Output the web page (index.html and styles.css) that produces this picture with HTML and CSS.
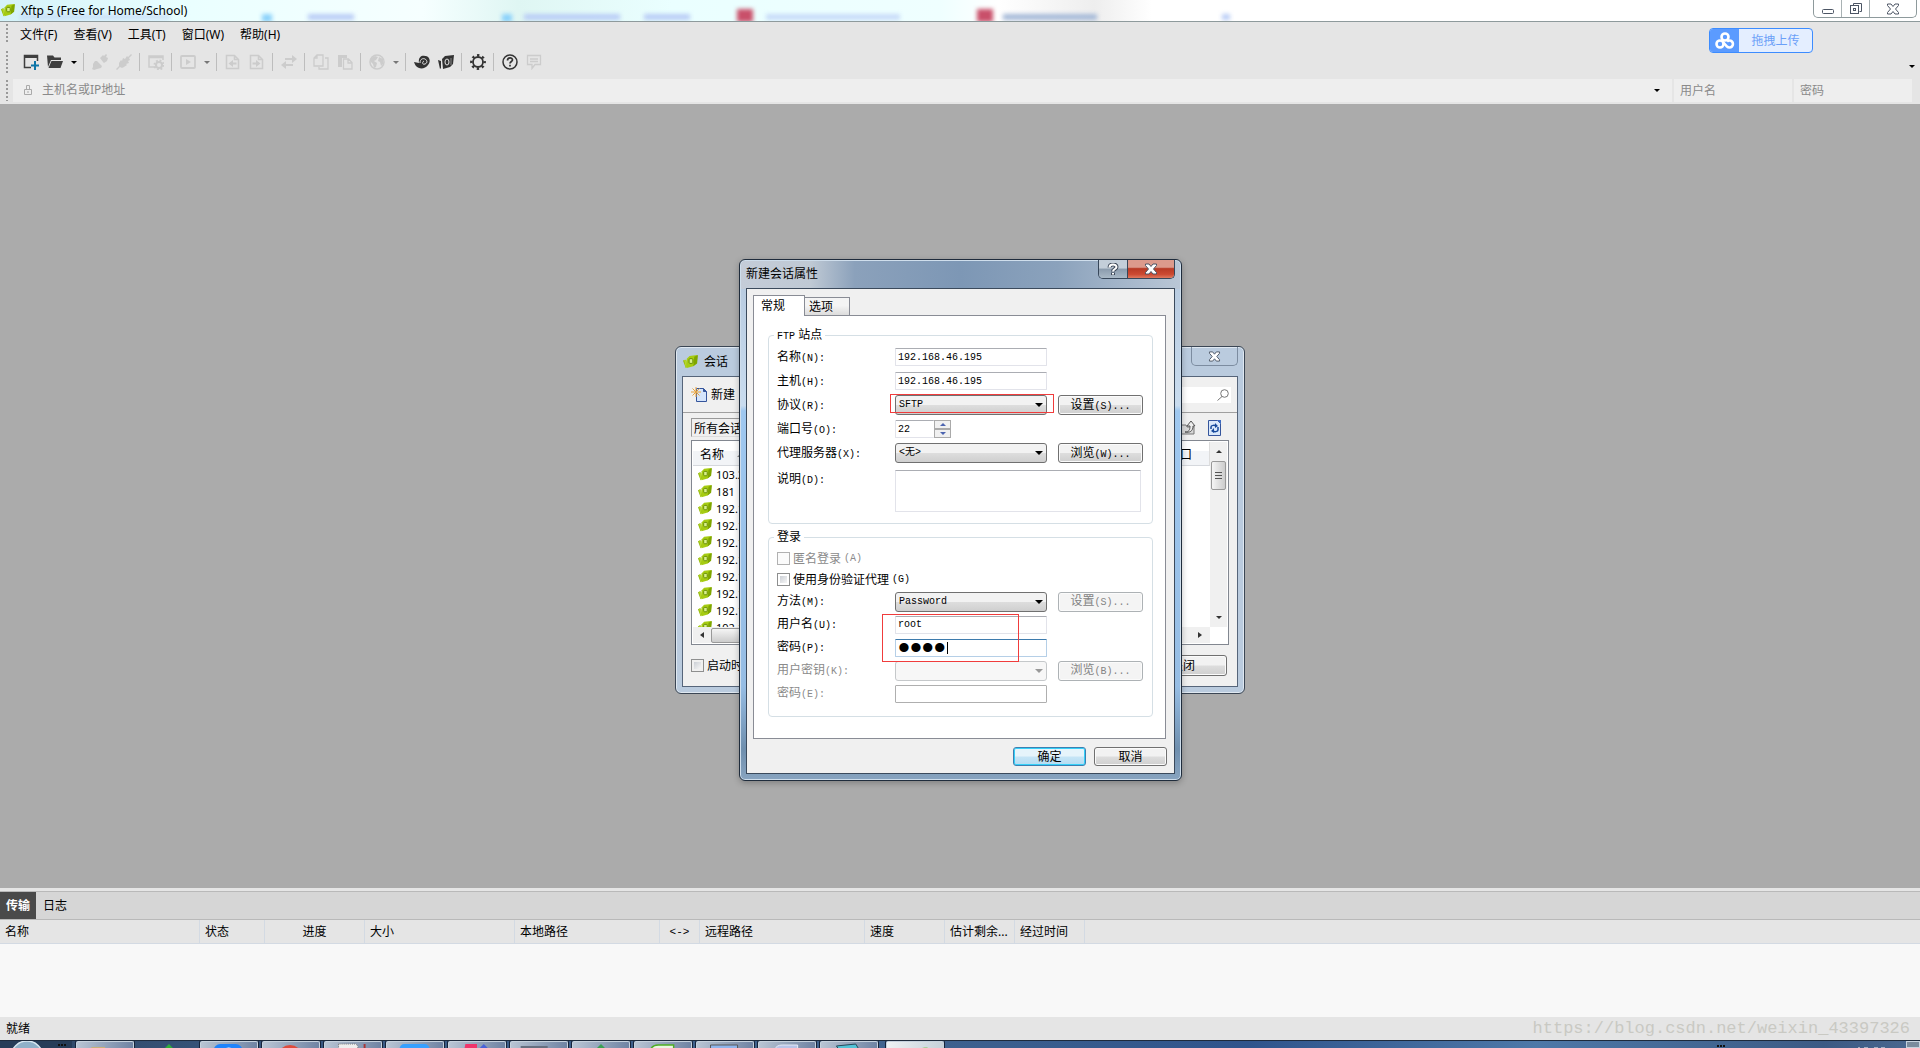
FILE: index.html
```html
<!DOCTYPE html>
<html lang="zh-CN">
<head>
<meta charset="utf-8">
<title>Xftp 5</title>
<link rel="stylesheet" href="styles.css">
</head>
<body>
<svg class="defs" aria-hidden="true">
  <symbol id="leaf" viewBox="0 0 16 16">
    <path d="M0 7l3-1 2 7-2 2z" fill="#8fb500"/>
    <path d="M1 6l3 1v7l-1 1z" fill="#b4d62a"/>
    <path d="M4 5l3-3 8-1-1 9-3 3-7 2z" fill="#a6cc12"/>
    <path d="M12 3l4-2-1 9-4 3z" fill="#7fa600"/>
    <rect x="6.500" y="5" width="4" height="5" rx="1" fill="#d9f08a" stroke="#5f8500"/>
  </symbol>
  <symbol id="cross" viewBox="0 0 14 12">
    <path d="M1.500 1h3.500l2 2.500L9 1h3.500v1.500L9.500 6l3 3.500V11H9L7 8.500 5 11H1.500V9.500l3-3.500-3-3.500z" fill="#fff" stroke="#4c5564"/>
  </symbol>
</svg>

<header class="titlebar">
  <svg class="app-icon" viewBox="0 0 16 16"><use href="#leaf"/></svg>
  <h1>Xftp 5 (Free for Home/School)</h1>
  <div class="ghosts" aria-hidden="true">
    <i class="ghost g1"></i><i class="ghost g2"></i><i class="ghost g3"></i><i class="ghost g8"></i><i class="ghost g4"></i><i class="ghost g9"></i>
    <i class="ghost red r1"></i><i class="ghost g5"></i><i class="ghost red r2"></i><i class="ghost g6"></i><i class="ghost g7"></i>
  </div>
  <div class="caption">
    <button aria-label="最小化"><svg width="14" height="12"><rect x="1.500" y="6.500" width="11" height="4" rx="1" fill="#fff" stroke="#4c5564"/></svg></button>
    <button aria-label="还原"><svg width="14" height="13"><path d="M4.500 3.500v-2h8v8h-2" fill="#fff" stroke="#4c5564"/><rect x="1.500" y="3.500" width="8" height="8" fill="#fff" stroke="#4c5564"/><rect x="4.500" y="6.500" width="2" height="2" fill="#fff" stroke="#4c5564"/></svg></button>
    <button class="wide" aria-label="关闭"><svg width="14" height="12"><use href="#cross"/></svg></button>
  </div>
</header>

<div class="chrome">
  <nav class="menubar">
    <span class="grip"></span>
    <a href="#">文件(F)</a><a href="#">查看(V)</a><a href="#">工具(T)</a><a href="#">窗口(W)</a><a href="#">帮助(H)</a>
  </nav>
  <div class="toolbar">
    <span class="grip"></span>
    <button aria-label="新建"><svg viewBox="0 0 16 16"><path d="M8 13.500H1.500v-12h13V7M1 3h14" fill="none" stroke="#3f3f3f" stroke-width="1.500"/><path d="M1 1h14v3H1z" fill="#3f3f3f"/><path d="M12 7v9M8 11.500h8" stroke="#0d76a8" stroke-width="2"/></svg></button>
    <button aria-label="打开"><svg viewBox="0 0 16 16"><path d="M0 1.500h6l1.500 2H14V6H4L1 13z" fill="#3f3f3f"/><path d="M4.500 7H16l-2.500 7H1.500z" fill="#3f3f3f"/></svg></button>
    <button class="drop" aria-label="更多"></button><i class="sep"></i>
    <button class="off" aria-label="断开"><svg viewBox="0 0 16 16"><path d="M8 4l3-3 1 1 2-2 1 1-1 2 2 1-1 3-3 2-1-1zM1 10l2-3 2 0 5 5-1 2-4 1-3 1-2-1 1-2z"/></svg></button>
    <button class="off" aria-label="连接"><svg viewBox="0 0 16 16"><path d="M3 9l2-3 1 1 1-3 2 1 2-3 1 1 3-3 1 1-3 3 1 2-2 1 1 2-3 1 1 1-3 2-2 1-2-1-3 3-1-1 3-3z"/></svg></button><i class="sep"></i>
    <button class="off" aria-label="属性"><svg viewBox="0 0 16 16"><path d="M7 13H1V2h14v4M1 3.500h14" fill="none" stroke="currentColor" stroke-width="1.500"/><circle cx="11" cy="11" r="3" fill="none" stroke="currentColor" stroke-width="2"/><circle cx="11" cy="11" r="4.500" fill="none" stroke="currentColor" stroke-width="2" stroke-dasharray="1.800 1.730"/></svg></button><i class="sep"></i>
    <button class="off" aria-label="同步"><svg viewBox="0 0 16 16"><rect x="1" y="2" width="14" height="12" rx="1" fill="none" stroke="currentColor" stroke-width="1.800"/><path d="M6 5l5 3-5 3z"/></svg></button>
    <button class="drop gray" aria-label="更多"></button><i class="sep"></i>
    <button class="off" aria-label="下载"><svg viewBox="0 0 16 16"><path d="M1.500 1.500h8l4 4v9h-12zM9.500 1.500v4h4" fill="none" stroke="currentColor" stroke-width="1.500"/><path d="M3.500 9.500L8 6v2.500h3.500v2H8V13z"/></svg></button>
    <button class="off" aria-label="上传"><svg viewBox="0 0 16 16"><path d="M1.500 1.500h8l4 4v9h-12zM9.500 1.500v4h4" fill="none" stroke="currentColor" stroke-width="1.500"/><path d="M11.500 9.500L7 6v2.500H3.500v2H7V13z"/></svg></button><i class="sep"></i>
    <button class="off" aria-label="交换"><svg viewBox="0 0 16 16"><path d="M4 4h7V1l5 4-5 4V6H4zM12 10H5V7l-5 4 5 4v-3h7z"/></svg></button><i class="sep"></i>
    <button class="off" aria-label="复制"><svg viewBox="0 0 16 16"><path d="M4 1h6v11H1V4zM12 4h3v11H6v-2M4 1v3H1" fill="none" stroke="currentColor" stroke-width="1.300"/></svg></button>
    <button class="off" aria-label="粘贴"><svg viewBox="0 0 16 16"><path d="M1 1h9v3H5v9H1z"/><path d="M6.500 5h5l3.500 3.500V15H6.500zM11 5v4h4" fill="none" stroke="currentColor" stroke-width="1.300"/></svg></button><i class="sep"></i>
    <button class="off" aria-label="编码"><svg viewBox="0 0 16 16"><circle cx="8" cy="8" r="7" fill="none" stroke="currentColor" stroke-width="1.500"/><path d="M2 4l4-2 3 1-2 3-2 1 3 2-1 4-2 1-1-4-3-3zM10 3l4 2v5l-2 2-1-4-2-1z"/></svg></button>
    <button class="drop gray" aria-label="更多"></button><i class="sep"></i>
    <button aria-label="Xshell"><svg viewBox="0 0 16 16"><path d="M0 8l5 1c-1-5 2-8 6-7 5 0 6 6 3 9-2 3-6 4-9 3C2 13 1 11 0 8z" fill="#333"/><path d="M6 9c0-4 3-5 5-4s3 4 0 5-3-2-1-3" fill="none" stroke="#e5e5e5"/></svg></button>
    <button aria-label="Xftp"><svg viewBox="0 0 16 16"><path d="M0 6l3 1v7l-1 1zM4 5l3-3 9-1-1 9-3 3-7 2z" fill="#333"/><ellipse cx="9" cy="8" rx="2" ry="3" fill="none" stroke="#e5e5e5"/><path d="M13 4v7" stroke="#888"/></svg></button><i class="sep"></i>
    <button aria-label="选项"><svg viewBox="0 0 16 16"><circle cx="8" cy="8" r="5" fill="none" stroke="#333" stroke-width="1.800"/><circle cx="8" cy="8" r="6.700" fill="none" stroke="#333" stroke-width="2.400" stroke-dasharray="2.400 2.862" stroke-dashoffset="1.200"/></svg></button><i class="sep"></i>
    <button aria-label="帮助"><svg viewBox="0 0 16 16"><circle cx="8" cy="8" r="7" fill="none" stroke="#333" stroke-width="1.500"/><path d="M5.500 6.500c0-3.500 5-3.300 5-.5 0 1.500-2.500 1.500-2.500 3.500M8 10.800v1.700" fill="none" stroke="#333" stroke-width="1.700"/></svg></button>
    <button class="off" aria-label="反馈"><svg viewBox="0 0 16 16"><path d="M1.500 1.500h13v9H9l-3 4v-4H1.500zM4 5h8M4 7.500h8" fill="none" stroke="currentColor" stroke-width="1.300"/></svg></button>
    <button class="drop overflow" aria-label="工具栏选项"></button>
  </div>
  <form class="address">
    <span class="grip"></span>
    <label class="host"><svg width="10" height="12" viewBox="0 0 10 12"><path d="M1.500 5.500h7v5h-7zM3.500 5V1.500h3V5M5 7v2" fill="none" stroke="#aaa"/></svg><input type="text" placeholder="主机名或IP地址" aria-label="主机名或IP地址"><i class="tri"></i></label>
    <input type="text" placeholder="用户名" aria-label="用户名">
    <input type="text" placeholder="密码" aria-label="密码">
  </form>
  <button class="upload"><span><svg width="20" height="18" viewBox="0 0 20 18" fill="none" stroke="#fff" stroke-width="2.600"><circle cx="10" cy="5" r="3.500"/><circle cx="5" cy="12" r="3.500"/><path d="M12 9.500a3.500 3.500 0 1 1 0 5L8 10"/></svg></span><b>拖拽上传</b></button>
</div>

<main class="workspace">
  <section class="win sessions" aria-label="会话">
    <div class="win-title"><svg width="15" height="15"><use href="#leaf"/></svg><h2>会话</h2>
      <button aria-label="关闭"><svg width="13" height="11"><use href="#cross"/></svg></button></div>
    <div class="client">
      <div class="s-tools">
        <button><svg width="17" height="16" viewBox="0 0 17 16"><path d="M5.500 1.500h7l3 3v10h-10z" fill="#d4e4fb" stroke="#35559c"/><path d="M12.500 1.500v3h3" fill="#35559c" stroke="#35559c"/><path d="M5 0v10M0 5h10M1.500 1.500l7 7M8.500 1.500l-7 7" stroke="#e8a33c"/></svg>新建</button>
        <label class="search"><input type="text" aria-label="搜索"><svg width="12" height="12" viewBox="0 0 12 12" fill="none" stroke="#777"><circle cx="7.500" cy="4.500" r="3.800"/><path d="M5 7.500L.5 11.500"/></svg></label>
      </div>
      <div class="s-path">
        <input type="text" value="所有会话" aria-label="路径">
        <button aria-label="上一级"><svg width="16" height="15" viewBox="0 0 16 15"><path d="M1 5h5l1 2h7v7H1z" fill="#d8d8d8" stroke="#777"/><path d="M5 12c4 0 5-2 5-6H7l4-5 4 5h-2c0 5-3 7-8 6z" fill="#eee" stroke="#555"/></svg></button>
        <button aria-label="刷新"><svg width="13" height="16" viewBox="0 0 13 16"><path d="M.5.500h9l3 3v12H.5z" fill="#d9e8fb" stroke="#35559c"/><path d="M9 0l4 4V0z" fill="#3d6cc4"/><path d="M3 9V7c0-2 4-2 5-1M10 7v3c0 2-4 2-5 1" fill="none" stroke="#16499c" stroke-width="1.500"/><path d="M7 3v5l3-2zM6 8v5l-3-2z" fill="#16499c"/></svg></button>
      </div>
      <div class="s-list">
        <div class="s-scroll">
          <table>
            <thead><tr><th>名称<i></i></th><th class="port">端口</th></tr></thead>
            <tbody>
              <tr><td colspan="2"><svg><use href="#leaf"/></svg>103.2</td></tr>
              <tr><td colspan="2"><svg><use href="#leaf"/></svg>181</td></tr>
              <tr><td colspan="2"><svg><use href="#leaf"/></svg>192.1</td></tr>
              <tr><td colspan="2"><svg><use href="#leaf"/></svg>192.1</td></tr>
              <tr><td colspan="2"><svg><use href="#leaf"/></svg>192.1</td></tr>
              <tr><td colspan="2"><svg><use href="#leaf"/></svg>192.1</td></tr>
              <tr><td colspan="2"><svg><use href="#leaf"/></svg>192.1</td></tr>
              <tr><td colspan="2"><svg><use href="#leaf"/></svg>192.1</td></tr>
              <tr><td colspan="2"><svg><use href="#leaf"/></svg>192.1</td></tr>
              <tr><td colspan="2"><svg><use href="#leaf"/></svg>192.1</td></tr>
            </tbody>
          </table>
        </div>
        <div class="vbar"><i class="up"></i><b></b><i class="down"></i></div>
        <div class="hbar"><i class="left"></i><b></b><i class="right"></i></div>
      </div>
      <div class="s-foot"><label><input type="checkbox">启动时</label><button>关闭</button></div>
    </div>
  </section>

  <section class="win props" aria-label="新建会话属性">
    <div class="win-title"><h2>新建会话属性</h2>
      <div class="p-caption"><button aria-label="帮助"><svg width="12" height="13" viewBox="0 0 12 13"><path d="M2.500 4.500c0-4 7-4 7-.5C9.500 6 6 6 6 8.500M6 9.500V12" fill="none" stroke="#3f4a5a" stroke-width="4"/><path d="M2.500 4.500c0-4 7-4 7-.5C9.500 6 6 6 6 8.500M6 10v1.500" fill="none" stroke="#fff" stroke-width="2"/></svg></button><button class="x" aria-label="关闭"><svg width="14" height="12"><use href="#cross"/></svg></button></div></div>
    <form class="client">
      <div class="tabs"><button type="button" class="on">常规</button><button type="button">选项</button></div>
      <div class="page">
        <fieldset>
          <legend><kbd>FTP</kbd> 站点</legend>
          <div class="grid">
            <label for="name">名称<kbd>(N):</kbd></label><input id="name" type="text" value="192.168.46.195">
            <label for="host">主机<kbd>(H):</kbd></label><input id="host" type="text" value="192.168.46.195">
            <label for="proto">协议<kbd>(R):</kbd></label><span class="sel"><select id="proto"><option>SFTP</option></select><i class="mark m1"></i></span><button type="button">设置<kbd>(S)...</kbd></button>
            <label for="port">端口号<kbd>(O):</kbd></label><span class="spin"><input id="port" type="text" value="22"><i class="up"></i><i class="down"></i></span>
            <label for="proxy">代理服务器<kbd>(X):</kbd></label><span class="sel"><select id="proxy"><option>&lt;无&gt;</option></select></span><button type="button">浏览<kbd>(W)...</kbd></button>
            <label for="desc" class="top">说明<kbd>(D):</kbd></label><textarea id="desc"></textarea>
          </div>
        </fieldset>
        <fieldset class="login">
          <legend>登录</legend>
          <label class="check off"><input type="checkbox" disabled>匿名登录<kbd>(A)</kbd></label>
          <label class="check"><input type="checkbox">使用身份验证代理<kbd>(G)</kbd></label>
          <div class="grid tight">
            <label for="method">方法<kbd>(M):</kbd></label><span class="sel"><select id="method"><option>Password</option></select></span><button type="button" disabled>设置<kbd>(S)...</kbd></button>
            <label for="user">用户名<kbd>(U):</kbd></label><span class="sel plain"><input id="user" type="text" value="root"><i class="mark m2"></i></span>
            <label for="pass">密码<kbd>(P):</kbd></label><span class="pw"><input id="pass" type="password" value="root" class="focus"><i></i></span>
            <label for="key" class="off">用户密钥<kbd>(K):</kbd></label><span class="sel off"><select id="key" disabled></select></span><button type="button" disabled>浏览<kbd>(B)...</kbd></button>
            <label for="phrase" class="off">密码<kbd>(E):</kbd></label><input id="phrase" type="password" disabled>
          </div>
        </fieldset>
      </div>
      <div class="actions"><button type="button" class="ok">确定</button><button type="button">取消</button></div>
    </form>
  </section>
</main>

<section class="transfer">
  <div class="t-tabs"><button class="on">传输</button><button>日志</button></div>
  <div class="t-body">
    <table>
      <colgroup><col class="c200"><col class="c65"><col class="c100"><col class="c150"><col class="c145"><col class="c40"><col class="c165"><col class="c80"><col class="c70"><col class="c70"><col></colgroup>
      <thead><tr><th>名称</th><th>状态</th><th class="mid">进度</th><th>大小</th><th>本地路径</th><th class="mid code">&lt;-&gt;</th><th>远程路径</th><th>速度</th><th>估计剩余...</th><th>经过时间</th><th></th></tr></thead>
    </table>
  </div>
</section>
<footer class="status"><span>就绪</span><span class="link">https://blog.csdn.net/weixin_43397326</span></footer>
<div class="taskbar" aria-hidden="true">
  <div class="orb"><svg width="76" height="8"><circle cx="27" cy="17" r="16" fill="#8fb0c8" stroke="#d8e8f2" stroke-width="1.500"/><path d="M58 5h2M61 5h2M64 5h2" stroke="#111" stroke-width="2"/></svg></div>
  <i class="task"><svg viewBox="0 0 58 8"><path d="M15 8V6h14v2z" fill="#c8b078"/></svg></i>
  <i class="task flat"><svg viewBox="0 0 58 8"><path d="M26 8l5-5 5 5z" fill="#2fae3a"/></svg></i>
  <i class="task"><svg viewBox="0 0 58 8"><rect x="13" y="3" width="30" height="14" rx="7" fill="#1f83fb"/><path d="M24 8q5-3 9 0z" fill="#fff"/></svg></i>
  <i class="task"><svg viewBox="0 0 58 8"><circle cx="28" cy="17" r="13" fill="#e04b3c"/></svg></i>
  <i class="task"><svg viewBox="0 0 58 8"><path d="M14 3h18l2 2v3H14z" fill="#eee" stroke="#777" stroke-dasharray="1 1"/><path d="M41 3v5" stroke="#a33" stroke-width="2"/></svg></i>
  <i class="task"><svg viewBox="0 0 58 8"><rect x="13" y="3" width="31" height="14" rx="5" fill="#37a0ff"/></svg></i>
  <i class="task"><svg viewBox="0 0 58 8"><path d="M17 3h12v5H16z" fill="#f0356b"/><path d="M31 8l5-5 5 5z" fill="#4a62d8"/></svg></i>
  <i class="task"><svg viewBox="0 0 58 8"><path d="M10 5h28v3H10z" fill="#666f80"/></svg></i>
  <i class="task"><svg viewBox="0 0 58 8"><path d="M24 8l5-5 5 5z" fill="#3ba054"/></svg></i>
  <i class="task"><svg viewBox="0 0 58 8"><path d="M16 9q2-5 8-5h16v5z" fill="#eaf5e2" stroke="#4fae22" stroke-width="1.500"/></svg></i>
  <i class="task"><svg viewBox="0 0 58 8"><path d="M14 4h28v5H14z" fill="#8fb5ec" stroke="#555"/></svg></i>
  <i class="task"><svg viewBox="0 0 58 8"><path d="M16 9q2-5 8-5h16v5z" fill="#b8c4e8" stroke="#e7ecf8"/></svg></i>
  <i class="task"><svg viewBox="0 0 58 8"><path d="M16 5l20-2 3 5H18z" fill="#53c2d6" stroke="#245"/></svg></i>
  <i class="task active"><svg viewBox="0 0 58 8"><path d="M34 8l5-2 3 0v2z" fill="#a9cf9a"/></svg></i>
  <svg class="tray" width="200" height="8"><path d="M8 5h2M11 5h2M14 5h2" stroke="#111" stroke-width="2"/><path d="M149 7h2M155 7h4M165 7h4M172 7h4" stroke="#fff"/></svg>
  <i class="show"></i>
</div>
</body>
</html>
```
FILE: styles.css
```css
* { box-sizing: border-box; }
html { font: 12px/16px "Noto Sans", "Noto Sans CJK SC", sans-serif; color: #000; }
body { margin: 0; min-height: 100vh; display: flex; flex-direction: column; background: #e5e5e5; overflow: hidden; }
button, input, select, textarea { font: inherit; color: inherit; margin: 0; padding: 0; border: 0; background: none; border-radius: 0; outline: 0; min-width: 0; }
h1, h2 { font: inherit; margin: 0; }
a { color: inherit; text-decoration: none; }
kbd { font: 10px/14px "Liberation Mono", monospace; }
svg { display: block; flex: none; }
table { border-collapse: separate; border-spacing: 0; table-layout: fixed; width: 100%; }
th { font-weight: normal; text-align: left; }
.defs { position: absolute; width: 0; height: 0; }

/* title bar */
.titlebar { position: relative; height: 22px; display: flex; align-items: flex-start; border-bottom: 1px solid #8e9a9c; overflow: hidden;
  background: linear-gradient(90deg, #d4f2f9 0, #eaffff 10%, #f6ffff 22%, #dff6f3 27%, #eaffff 35%, #efffff 49%, #fff 52%, #eee 57%, #fff 60%, #fff 100%); }
.app-icon { width: 14px; height: 14px; margin: 3px 6px 0 1px; }
.titlebar h1 { position: relative; z-index: 1; line-height: 21px; flex: 1; }
.ghosts { position: absolute; inset: 0; filter: blur(2px); }
.ghost { position: absolute; top: 14px; height: 6px; width: 46px; background: #b9cdf6; }
.g1 { left: 20px; width: 150px; opacity: .5; }
.g2 { left: 262px; width: 10px; height: 8px; background: #8bd2fb; }
.g3 { left: 308px; }
.g8 { left: 502px; width: 10px; height: 8px; background: #8bd2fb; }
.g4 { left: 524px; width: 96px; }
.g9 { left: 644px; }
.red { top: 9px; width: 16px; height: 13px; background: #c9506a; }
.r1 { left: 737px; }
.r2 { left: 977px; }
.g5 { left: 766px; width: 134px; opacity: .7; }
.g6 { left: 1003px; width: 94px; background: #a5b9d8; }
.g7 { left: 1222px; width: 8px; }
.caption { position: relative; display: flex; height: 18px; margin-right: 3px; border: 1px solid #8e9a9c; border-top: 0; border-radius: 0 0 5px 5px; }
.caption button { width: 28px; display: grid; place-items: center; border-right: 1px solid #a9b2b4; }
.caption button.wide { width: 46px; border: 0; }

/* menu, tool and address bars */
.chrome { position: relative; height: 82px; flex: none; }
.grip { width: 2px; flex: none; margin: 2px 12px 2px 6px; background: repeating-linear-gradient(#999 0 2px, transparent 2px 4px); }
.menubar { display: flex; height: 24px; line-height: 25px; }
.menubar a { margin-right: 16px; }
.toolbar { display: flex; height: 32px; align-items: center; }
.toolbar .grip { height: 23px; margin: 0 11px 0 6px; }
.toolbar button { width: 24px; height: 24px; padding: 4px; color: #ccc; }
.toolbar button svg { width: 16px; height: 16px; fill: #ccc; }
.toolbar .sep { width: 1px; height: 18px; margin: 0 4px 0 3px; background: #bdbdbd; }
.toolbar .drop { width: 13px; display: grid; place-items: center; }
.drop::after, .tri { content: ""; border: 3px solid transparent; border-top-color: #000; border-bottom: 0; }
.drop.gray::after { border-top-color: #777; }
.toolbar .overflow { margin-left: auto; align-self: flex-end; margin-right: 2px; }
.address { display: flex; height: 24px; padding-top: 1px; }
.address .grip { margin: 1px 5px 1px 6px; }
.address label, .address > input { background: #eee; height: 23px; padding-bottom: 1px; }
.address label { flex: 1; display: flex; align-items: center; padding: 0 12px 1px 10px; }
.address label input { flex: 1; padding-left: 9px; }
.address > input { width: 118px; margin-left: 2px; padding-left: 6px; }
.address > input:last-child { margin-right: 8px; }
.address ::placeholder { color: #8a8a8a; opacity: 1; }
.upload { position: absolute; right: 107px; top: 6px; width: 104px; height: 25px; display: flex; overflow: hidden; border: 1px solid #3c8cff; border-radius: 4px; background: #e4eeff; color: #6ba0f8; }
.upload span { width: 29px; height: 100%; background: #5b9bff; display: grid; place-items: center; }
.upload b { flex: 1; font-weight: normal; line-height: 23px; }

/* workspace and windows */
.workspace { position: relative; flex: 1; background: #ababab; }
.win { position: absolute; border: 1px solid #3b4654; border-radius: 6px; }
.win-title { display: flex; }
.sessions { left: calc(50% - 285px); top: 242px; width: 570px; height: 348px; padding: 0 6px 6px; background: #bacbde; box-shadow: inset 0 0 0 1px #dfe8f1; display: flex; flex-direction: column; }
.sessions .win-title { height: 29px; align-items: center; padding-left: 1px; gap: 6px; }
.sessions .win-title button { align-self: flex-start; margin-left: auto; width: 47px; height: 19px; border: 1px solid #7c8ca0; border-top: 0; border-radius: 0 0 5px 5px; display: grid; place-items: center; }
.sessions .client { flex: 1; background: #f0f0f0; border: 1px solid #56657a; display: flex; flex-direction: column; }
.s-tools { height: 36px; display: flex; align-items: center; justify-content: space-between; padding: 0 6px 0 8px; border-bottom: 1px solid #a0a0a0; }
.s-tools button { display: flex; gap: 3px; align-items: center; }
.search { width: 200px; height: 16px; background: #fff; display: flex; align-items: center; padding-right: 2px; }
.search input { flex: 1; }
.s-path { height: 27px; display: flex; align-items: center; padding: 2px 16px 0 8px; gap: 12px; }
.s-path input { flex: 1; height: 19px; border: 1px solid #999; border-right-color: #ddd; border-bottom-color: #ddd; padding-left: 2px; }
.s-list { margin: 0 8px; height: 205px; background: #fff; border: 1px solid #828790; display: grid; grid-template: 1fr 16px / 1fr 17px; padding: 1px; }
.s-scroll { overflow: hidden; height: 185px; }
.s-list th { height: 24px; padding: 2px 0 0 7px; background: linear-gradient(#fff 40%, #f2f4f7 40%); border-bottom: 1px solid #d5d8dd; }
.s-list th i { display: inline-block; margin-left: 13px; border: 4px solid transparent; border-bottom-color: #888; border-top: 0; vertical-align: middle; }
.s-list .port { width: 70px; padding-left: 28px; border-right: 1px solid #ddd; }
.s-list td { height: 17px; padding: 0 0 0 5px; font-size: 11px; line-height: 17px; }
.s-list td svg { width: 14px; height: 14px; float: left; margin: 1px 4px 0 0; }
.vbar, .hbar { background: #f0f0f0; display: flex; align-items: center; }
.vbar { flex-direction: column; padding: 8px 1px; }
.vbar b { width: 15px; height: 29px; margin-top: 8px; border: 1px solid #999; border-radius: 2px; background: repeating-linear-gradient(#555 0 1px, transparent 1px 3px) 50% 50% / 7px 8px no-repeat, linear-gradient(90deg, #f5f5f5, #ccc); }
.hbar { padding: 0 8px 0 7px; }
.hbar b { width: 300px; height: 15px; margin-left: 7px; border: 1px solid #999; border-radius: 2px; background: linear-gradient(#f5f5f5, #ccc); }
.up, .down, .left, .right { border: 3px solid transparent; }
.up { border-bottom-color: #333; border-top: 0; }
.down { border-top-color: #333; border-bottom: 0; margin-top: auto; }
.left { border-right: 4px solid #333; border-left: 0; }
.right { border-left: 4px solid #333; border-right: 0; margin-left: auto; }
.s-foot { flex: 1; display: flex; align-items: center; justify-content: space-between; padding: 0 10px 0 8px; }
.s-foot label { display: flex; align-items: center; gap: 3px; }
input[type=checkbox] { appearance: none; width: 13px; height: 13px; border: 1px solid #8e8f8f; background: linear-gradient(135deg, #cbcfd5, #f6f6f6) content-box #f4f4f4; padding: 2px; }
input[type=checkbox]:disabled { border-color: #b1b1b1; background: #fbfbfb; }
.s-foot button, .props .grid button, .actions button { border: 1px solid #707070; border-radius: 3px; background: linear-gradient(#f2f2f2 0 48%, #ddd 52%, #cfcfcf); box-shadow: inset 0 0 0 1px #fbfbfb; }
.s-foot button { width: 88px; height: 21px; }

/* session properties */
.props { left: calc(50% - 221px); top: 155px; width: 443px; height: 522px; padding: 0 6px 6px; border-color: #1f2c3c; box-shadow: inset 0 0 0 1px #cfdeec, 0 2px 6px rgba(0, 0, 0, .25);
  background: linear-gradient(90deg, #c4ccd8 0, #bfc9d4 16%, #8ba1bb 26%, #7d97b5 50%, #8ba2bc 72%, #bac7d6 100%) 0 0 / 100% 29px no-repeat, linear-gradient(#b5c8dd 0, #c9dcef 28%, #9fc8f0 29%, #96bde4 82%, #6f8fae 94%, #88a4c0); display: flex; flex-direction: column; }
.props .win-title { height: 28px; justify-content: space-between; }
.props h2 { line-height: 28px; }
.p-caption { display: flex; height: 19px; border: 1px solid #37475a; border-top: 0; border-radius: 0 0 5px 5px; overflow: hidden; }
.p-caption button { width: 28px; display: grid; place-items: center; background: linear-gradient(#c3ced9 45%, #8a9bad 50%, #a9b8c6); }
.p-caption .x { width: 47px; border-left: 1px solid #37475a; background: linear-gradient(#dc9a8c 0 40%, #b83a25 48%, #cc4a32 80%, #df7a60); }
.props .client { flex: 1; border: 1px solid #3b4a5c; background: #f0f0f0; display: flex; flex-direction: column; padding: 6px 8px 7px 6px; }
.tabs { display: flex; align-items: flex-end; height: 20px; }
.tabs button { height: 18px; width: 45px; border: 1px solid #898c95; border-left: 0; border-bottom: 0; padding-right: 12px; background: linear-gradient(#f4f4f4 45%, #dcdcdc); }
.tabs .on { position: relative; width: 52px; height: 21px; margin-bottom: -1px; background: #fff; border-left: 1px solid #898c95; }
.page { flex: 1; border: 1px solid #898c95; background: #fff; padding: 12px 12px 0 14px; }
fieldset { margin: 0 0 5px; padding: 3px 12px 10px 5px; border: 1px solid #d5dfe5; border-radius: 4px; min-width: 0; }
legend { padding: 0 3px; line-height: 14px; height: 14px; }
.login { margin-top: 6px; padding: 4px 12px 11px 5px; }
.grid { display: grid; grid-template-columns: 118px 152px 85px; grid-auto-rows: 24px; align-items: center; margin-left: 3px; }
.grid > label { grid-column: 1; line-height: 16px; }
.grid > button { grid-column: 3; margin-left: 11px; width: 85px; height: 20px; line-height: 16px; }
.grid > button:disabled { border-color: #adb2b5; background: #f4f4f4; color: #838383; }
.grid input { width: 152px; height: 18px; border: 1px solid #e2e3ea; border-top-color: #abadb3; border-radius: 1px; background: #fff; padding: 0 2px; font: 10px/14px "Liberation Mono", monospace; }
.tight { grid-auto-rows: 23px; }
.grid textarea { grid-column: 2 / 4; width: 246px; height: 42px; margin-top: 5px; border: 1px solid #e2e3ea; border-top-color: #abadb3; resize: none; align-self: start; }
.grid .top { align-self: start; margin-top: 6px; }
.props fieldset:first-child .grid { grid-template-rows: repeat(5, 24px) 48px; }
.sel { position: relative; display: block; }
.sel select { appearance: none; display: block; width: 152px; height: 20px; border: 1px solid #707070; border-radius: 3px; background: linear-gradient(#f2f2f2 0 48%, #ddd 52%, #cfcfcf); padding-left: 3px; font: 10px/16px "Liberation Mono", "Noto Sans CJK SC", monospace; }
.sel::after { content: ""; position: absolute; right: 4px; top: 8px; border: 4px solid transparent; border-top-color: #000; border-bottom: 0; pointer-events: none; }
.sel.plain::after { display: none; }
.sel.off select { border-color: #adb2b5; background: #f4f4f4; }
.sel.off::after { border-top-color: #999; }
.mark { position: absolute; border: 1px solid #f03c3c; pointer-events: none; z-index: 2; }
.m1 { left: -5px; top: -1px; width: 164px; height: 19px; }
.m2 { left: -13px; top: -2px; width: 137px; height: 48px; }
.plain input { display: block; }
.spin { display: grid; grid-template: 9px 9px / 39px 17px; }
.spin input { grid-row: 1 / 3; width: 39px; border-right: 0; }
.spin .up, .spin .down { border: 1px solid #aaa; background: #f0f0f0; margin: 0; display: grid; place-items: center; }
.spin i::after { content: ""; border: 3px solid transparent; }
.spin .up::after { border-bottom-color: #4c64b0; border-top: 0; }
.spin .down::after { border-top-color: #4c64b0; border-bottom: 0; }
.pw { position: relative; display: block; }
.grid .focus { display: block; border-color: #b5cfe7; border-top-color: #3d7bad; font: 34px/16px "Liberation Sans", sans-serif; }
.pw i { position: absolute; left: 52px; top: 3px; width: 1px; height: 12px; background: #000; }
.grid input:disabled { border-color: #afafaf; }
.check { display: flex; align-items: center; height: 21px; gap: 3px; margin-left: 3px; }
.off, .grid .off { color: #8a8a8a; }
.actions { display: flex; justify-content: flex-end; gap: 8px; padding-top: 8px; height: 27px; margin-right: -1px; }
.actions button { width: 73px; height: 19px; line-height: 16px; }
.actions .ok { border-color: #3c7fb1; box-shadow: inset 0 0 0 1px #35d0f8; background: linear-gradient(#e6f4fb 0 48%, #c6e5f6 52%, #b4dcf2); }

/* transfer panel */
.transfer { flex: none; height: 129px; border-top: 3px solid #e5e5e5; display: flex; flex-direction: column; }
.t-tabs { display: flex; height: 29px; background: #d6d6d6; border-top: 1px solid #b9b9b9; border-bottom: 1px solid #b9b9b9; }
.t-tabs button { padding: 0 7px; }
.t-tabs .on { width: 36px; padding: 0; background: #4a4a4a; color: #fff; font-weight: bold; }
.t-body { flex: 1; background: #f8f8f8; }
.t-body th { height: 24px; padding: 0 0 0 5px; background: #e5e5e5; border-right: 1px solid #d3dae3; border-bottom: 1px solid #d3dae3; white-space: nowrap; }
.t-body th:last-child { border-right: 0; }
.t-body .mid { text-align: center; padding: 0; }
.t-body .code { font-family: "Liberation Mono", monospace; font-size: 11px; }
.c200 { width: 200px; } .c65 { width: 65px; } .c100 { width: 100px; } .c150 { width: 150px; } .c145 { width: 145px; } .c40 { width: 40px; }
.c165 { width: 165px; } .c80 { width: 80px; } .c70 { width: 70px; }
.status { flex: none; height: 23px; display: flex; justify-content: space-between; padding: 0 10px 0 6px; line-height: 24px; }
.link { font: 17px/23px "Liberation Mono", monospace; color: #c9c9c3; }

/* taskbar */
.taskbar { flex: none; height: 8px; display: flex; gap: 4px; overflow: hidden; border-top: 1px solid #1d2a3c; background: linear-gradient(90deg, #2f4766, #3b5b86 20%, #41648f 45%, #2f548c 65%, #4d78a8 80%, #3c5a84 95%, #4a6890); }
.orb { width: 72px; background: #263c58; }
.orb svg { margin-top: -1px; }
.task { width: 58px; border: 1px solid #c6d2de; border-bottom: 0; border-radius: 2px 2px 0 0; background: linear-gradient(100deg, #b9c5d4, #6f83a3); box-shadow: 0 0 0 1px #15233a; }
.task svg { width: 56px; height: 8px; margin-top: -1px; }
.flat { border-color: transparent; background: none; box-shadow: none; }
.active { margin-left: 4px; background: linear-gradient(100deg, #eef2f4, #c5d0d9); }
.tray { margin-left: auto; margin-right: -7px; }
.show { width: 14px; border: 1px solid #c6d2de; background: #7a8b9d; }
```
